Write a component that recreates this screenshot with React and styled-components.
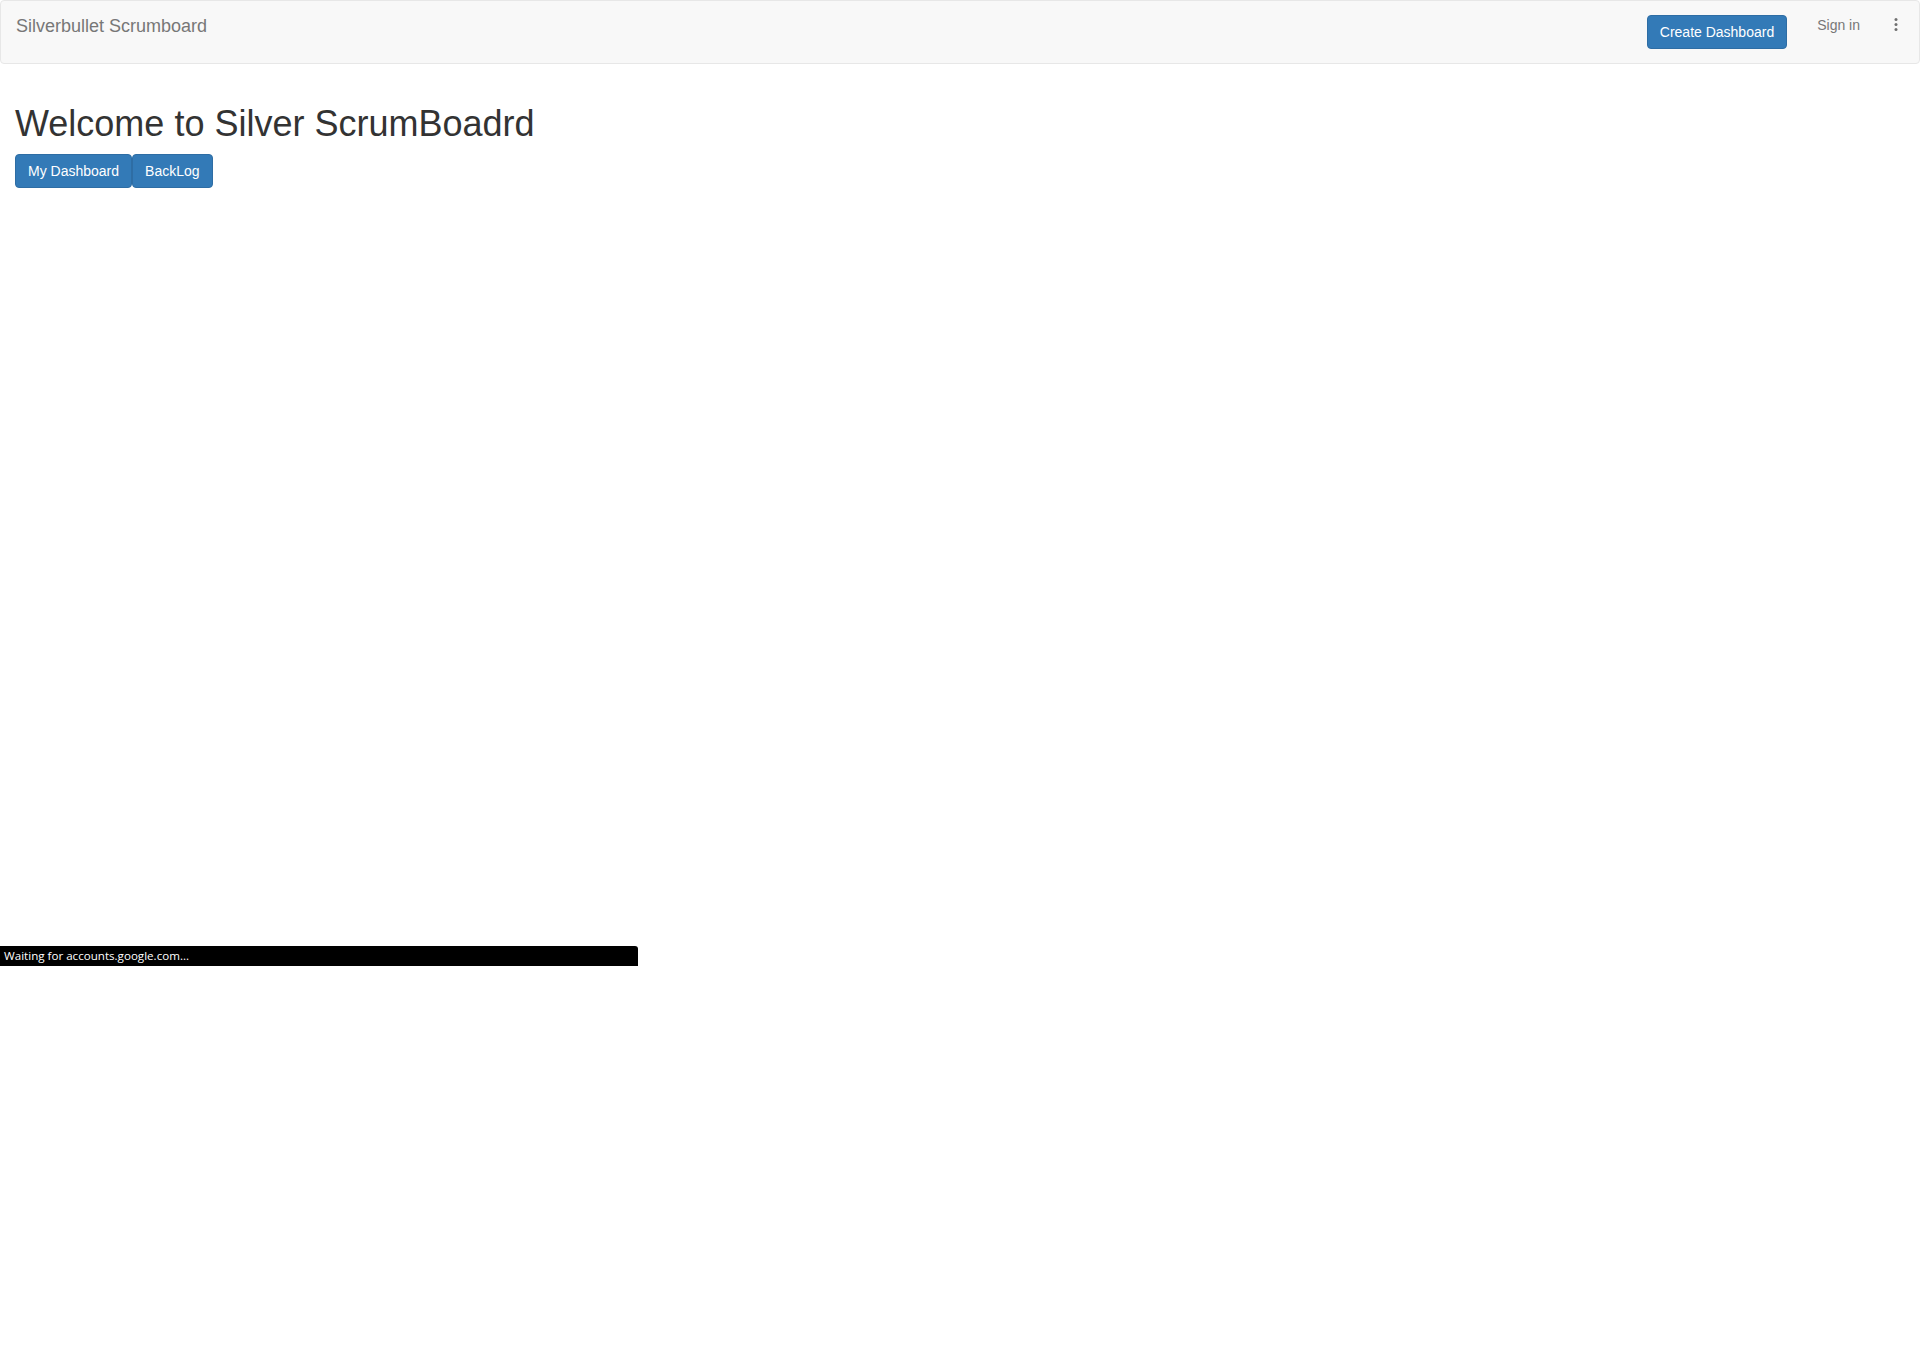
import React from "react";
import styled, { createGlobalStyle } from "styled-components";

const GlobalStyle = createGlobalStyle`
  html, body {
    margin: 0;
    padding: 0;
    background: #ffffff;
  }
  body {
    font-family: "Liberation Sans", Arial, Helvetica, sans-serif;
    font-size: 14px;
    line-height: 1.42857;
    color: #333333;
  }
  * { box-sizing: border-box; }
`;

const Page = styled.div`
  position: relative;
  min-height: 1345px;
`;

const Navbar = styled.nav`
  display: flex;
  justify-content: space-between;
  align-items: flex-start;
  height: 64px;
  margin-bottom: 20px;
  background: #f8f8f8;
  border: 1px solid #e7e7e7;
  border-radius: 4px;
`;

const Brand = styled.a`
  display: block;
  padding: 15px;
  font-size: 18px;
  line-height: 20px;
  color: #777777;
  text-decoration: none;
`;

const NavRight = styled.div`
  display: flex;
  align-items: flex-start;
  padding-right: 21px;
`;

const Button = styled.button`
  display: inline-block;
  margin: ${(p) => (p.$nav ? "14px 0 0 0" : "0")};
  padding: 6px 12px;
  font-family: "Liberation Sans", Arial, Helvetica, sans-serif;
  font-size: 14px;
  line-height: 20px;
  color: #ffffff;
  background: #337ab7;
  border: 1px solid #2e6da4;
  border-radius: 4px;
  white-space: nowrap;
  cursor: pointer;
`;

const SignIn = styled.a`
  display: block;
  margin-left: 30px;
  padding-top: 14px;
  font-size: 14px;
  line-height: 20px;
  color: #777777;
  text-decoration: none;
`;

const Kebab = styled.svg`
  display: block;
  margin-left: 34px;
  margin-top: 17px;
`;

const Container = styled.main`
  display: flow-root;
  padding: 0 15px;
`;

const Title = styled.h1`
  margin: 20px 0 10px;
  font-size: 36px;
  font-weight: 500;
  line-height: 1.1;
  color: #333333;
`;

const ButtonRow = styled.div`
  display: flex;
`;

const StatusBar = styled.div`
  position: absolute;
  left: 0;
  top: 946px;
  width: 638px;
  height: 20px;
  padding-left: 4px;
  background: #000000;
  border-top-right-radius: 3px;
  color: #ffffff;
  font-family: "Open Sans", "Noto Sans", sans-serif;
  font-size: 11.6px;
  line-height: 20px;
  white-space: nowrap;
`;

export default function App() {
  return (
    <Page>
      <GlobalStyle />
      <Navbar>
        <Brand href="#">Silverbullet Scrumboard</Brand>
        <NavRight>
          <Button $nav>Create Dashboard</Button>
          <SignIn href="#">Sign in</SignIn>
          <Kebab width="4" height="14" viewBox="0 0 4 14">
            <circle cx="2" cy="1.5" r="1.5" fill="#707070" />
            <circle cx="2" cy="6.5" r="1.5" fill="#707070" />
            <circle cx="2" cy="11.5" r="1.5" fill="#707070" />
          </Kebab>
        </NavRight>
      </Navbar>
      <Container>
        <Title>Welcome to Silver ScrumBoadrd</Title>
        <ButtonRow>
          <Button>My Dashboard</Button>
          <Button>BackLog</Button>
        </ButtonRow>
      </Container>
      <StatusBar>Waiting for accounts.google.com...</StatusBar>
    </Page>
  );
}
